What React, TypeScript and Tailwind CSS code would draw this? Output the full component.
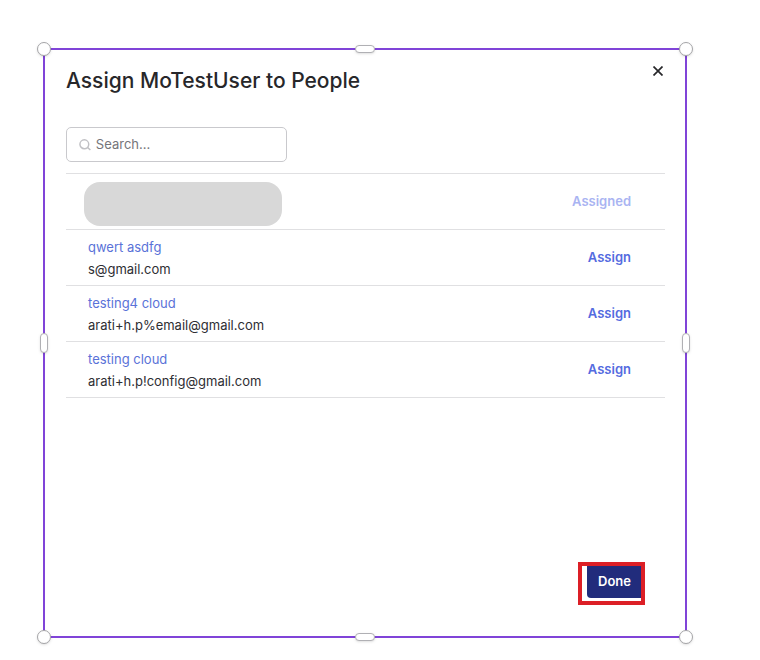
import { useState } from 'react';

interface Person {
    id: number;
    name: string;
    email: string;
    assigned: boolean;
    hidden?: boolean;
}

const PEOPLE: Person[] = [
    { id: 1, name: '', email: '', assigned: true, hidden: true },
    { id: 2, name: 'qwert asdfg', email: 's@gmail.com', assigned: false },
    { id: 3, name: 'testing4 cloud', email: 'arati+h.p%email@gmail.com', assigned: false },
    { id: 4, name: 'testing cloud', email: 'arati+h.p!config@gmail.com', assigned: false },
];

// Selection handles around the dialog
const CORNERS = ['-left-2 -top-2', '-right-2 -top-2', '-bottom-2 -left-2', '-bottom-2 -right-2'];
const SIDES = [
    '-top-[5px] left-1/2 h-2 w-5 -translate-x-1/2',
    '-bottom-[5px] left-1/2 h-2 w-5 -translate-x-1/2',
    '-left-[5px] top-1/2 h-5 w-2 -translate-y-1/2',
    '-right-[5px] top-1/2 h-5 w-2 -translate-y-1/2',
];

function Handles() {
    return (
        <>
            {CORNERS.map(pos => (
                <span key={pos} className={`absolute size-[14px] rounded-full border border-[#a5a5a8] bg-white shadow-sm ${pos}`} />
            ))}
            {SIDES.map(pos => (
                <span key={pos} className={`absolute rounded-[4px] border border-[#b0b0b4] bg-white shadow-sm ${pos}`} />
            ))}
        </>
    );
}

export default function App() {
    const [people, setPeople] = useState(PEOPLE);
    const [query, setQuery] = useState('');

    const handleAssign = (id: number) => {
        setPeople(prev => prev.map(p => p.id === id ? { ...p, assigned: true } : p));
    };

    const visible = people.filter(p => `${p.name} ${p.email}`.toLowerCase().includes(query.toLowerCase()));

    return (
        <main className="flex min-h-screen bg-white pt-12 pr-[73px] pb-[22px] pl-[43px] font-['Inter',sans-serif] text-[13px] text-[#2e2e33]">
            <section role="dialog" aria-labelledby="title" className="relative flex flex-1 flex-col border-2 border-[#8044d8] px-5 pl-[21px]">
                <Handles />

                <header className="flex items-start justify-between pt-[14px]">
                    <h1 id="title" className="text-[21px] leading-[34px] font-medium text-[#27272a]">Assign MoTestUser to People</h1>
                    <button type="button" aria-label="Close" className="flex size-[14px] items-center justify-center">
                        <svg viewBox="0 0 10 10" className="size-[10px]" fill="none" stroke="#27272a" strokeWidth="1.7">
                            <path d="M0.5 0.5 9.5 9.5M9.5 0.5 0.5 9.5" />
                        </svg>
                    </button>
                </header>

                <label className="mt-[29px] flex h-[35px] w-[221px] items-center gap-1 rounded-[5px] border border-[#c9c9cd] pl-3">
                    <svg viewBox="0 0 14 14" className="size-[14px]" fill="none" stroke="#c0c0c4" strokeWidth="1.6">
                        <circle cx="5.8" cy="6.2" r="4.8" />
                        <path d="m9.2 9.6 3.2 2.8" />
                    </svg>
                    <input
                        type="text"
                        aria-label="Search"
                        value={query}
                        onChange={e => setQuery(e.target.value)}
                        placeholder="Search..."
                        className="w-full min-w-0 outline-none placeholder:text-[#75757a]"
                    />
                </label>

                <table className="mt-[11px] w-full border-t border-[#e0e0e2]">
                    <tbody>
                        {visible.map(person => (
                            <tr key={person.id} className="h-14 border-b border-[#e0e0e2]">
                                <td className="pl-[22px] leading-[22px]">
                                    {person.hidden ? (
                                        <div className="mt-1 -ml-1 h-11 w-[198px] rounded-2xl bg-[#d8d8d8]" />
                                    ) : (
                                        <>
                                            <a href="#" className="block text-[#5a72d8]">{person.name}</a>
                                            <span className="block">{person.email}</span>
                                        </>
                                    )}
                                </td>
                                <td className="pr-[34px] text-right">
                                    <button
                                        type="button"
                                        disabled={person.assigned}
                                        onClick={() => handleAssign(person.id)}
                                        className="font-semibold text-[#546be0] disabled:text-[#a9b4f2]"
                                    >
                                        {person.assigned ? 'Assigned' : 'Assign'}
                                    </button>
                                </td>
                            </tr>
                        ))}
                    </tbody>
                </table>

                <footer className="mt-auto flex justify-end pr-5 pb-[31px]">
                    <div className="border-4 border-[#dc1f26] pb-[3px] pl-[5px]">
                        <button type="button" className="block h-8 rounded-bl-[4px] bg-[#212c7c] pr-[10px] pl-[11px] font-semibold text-white">Done</button>
                    </div>
                </footer>
            </section>
        </main>
    );
}
